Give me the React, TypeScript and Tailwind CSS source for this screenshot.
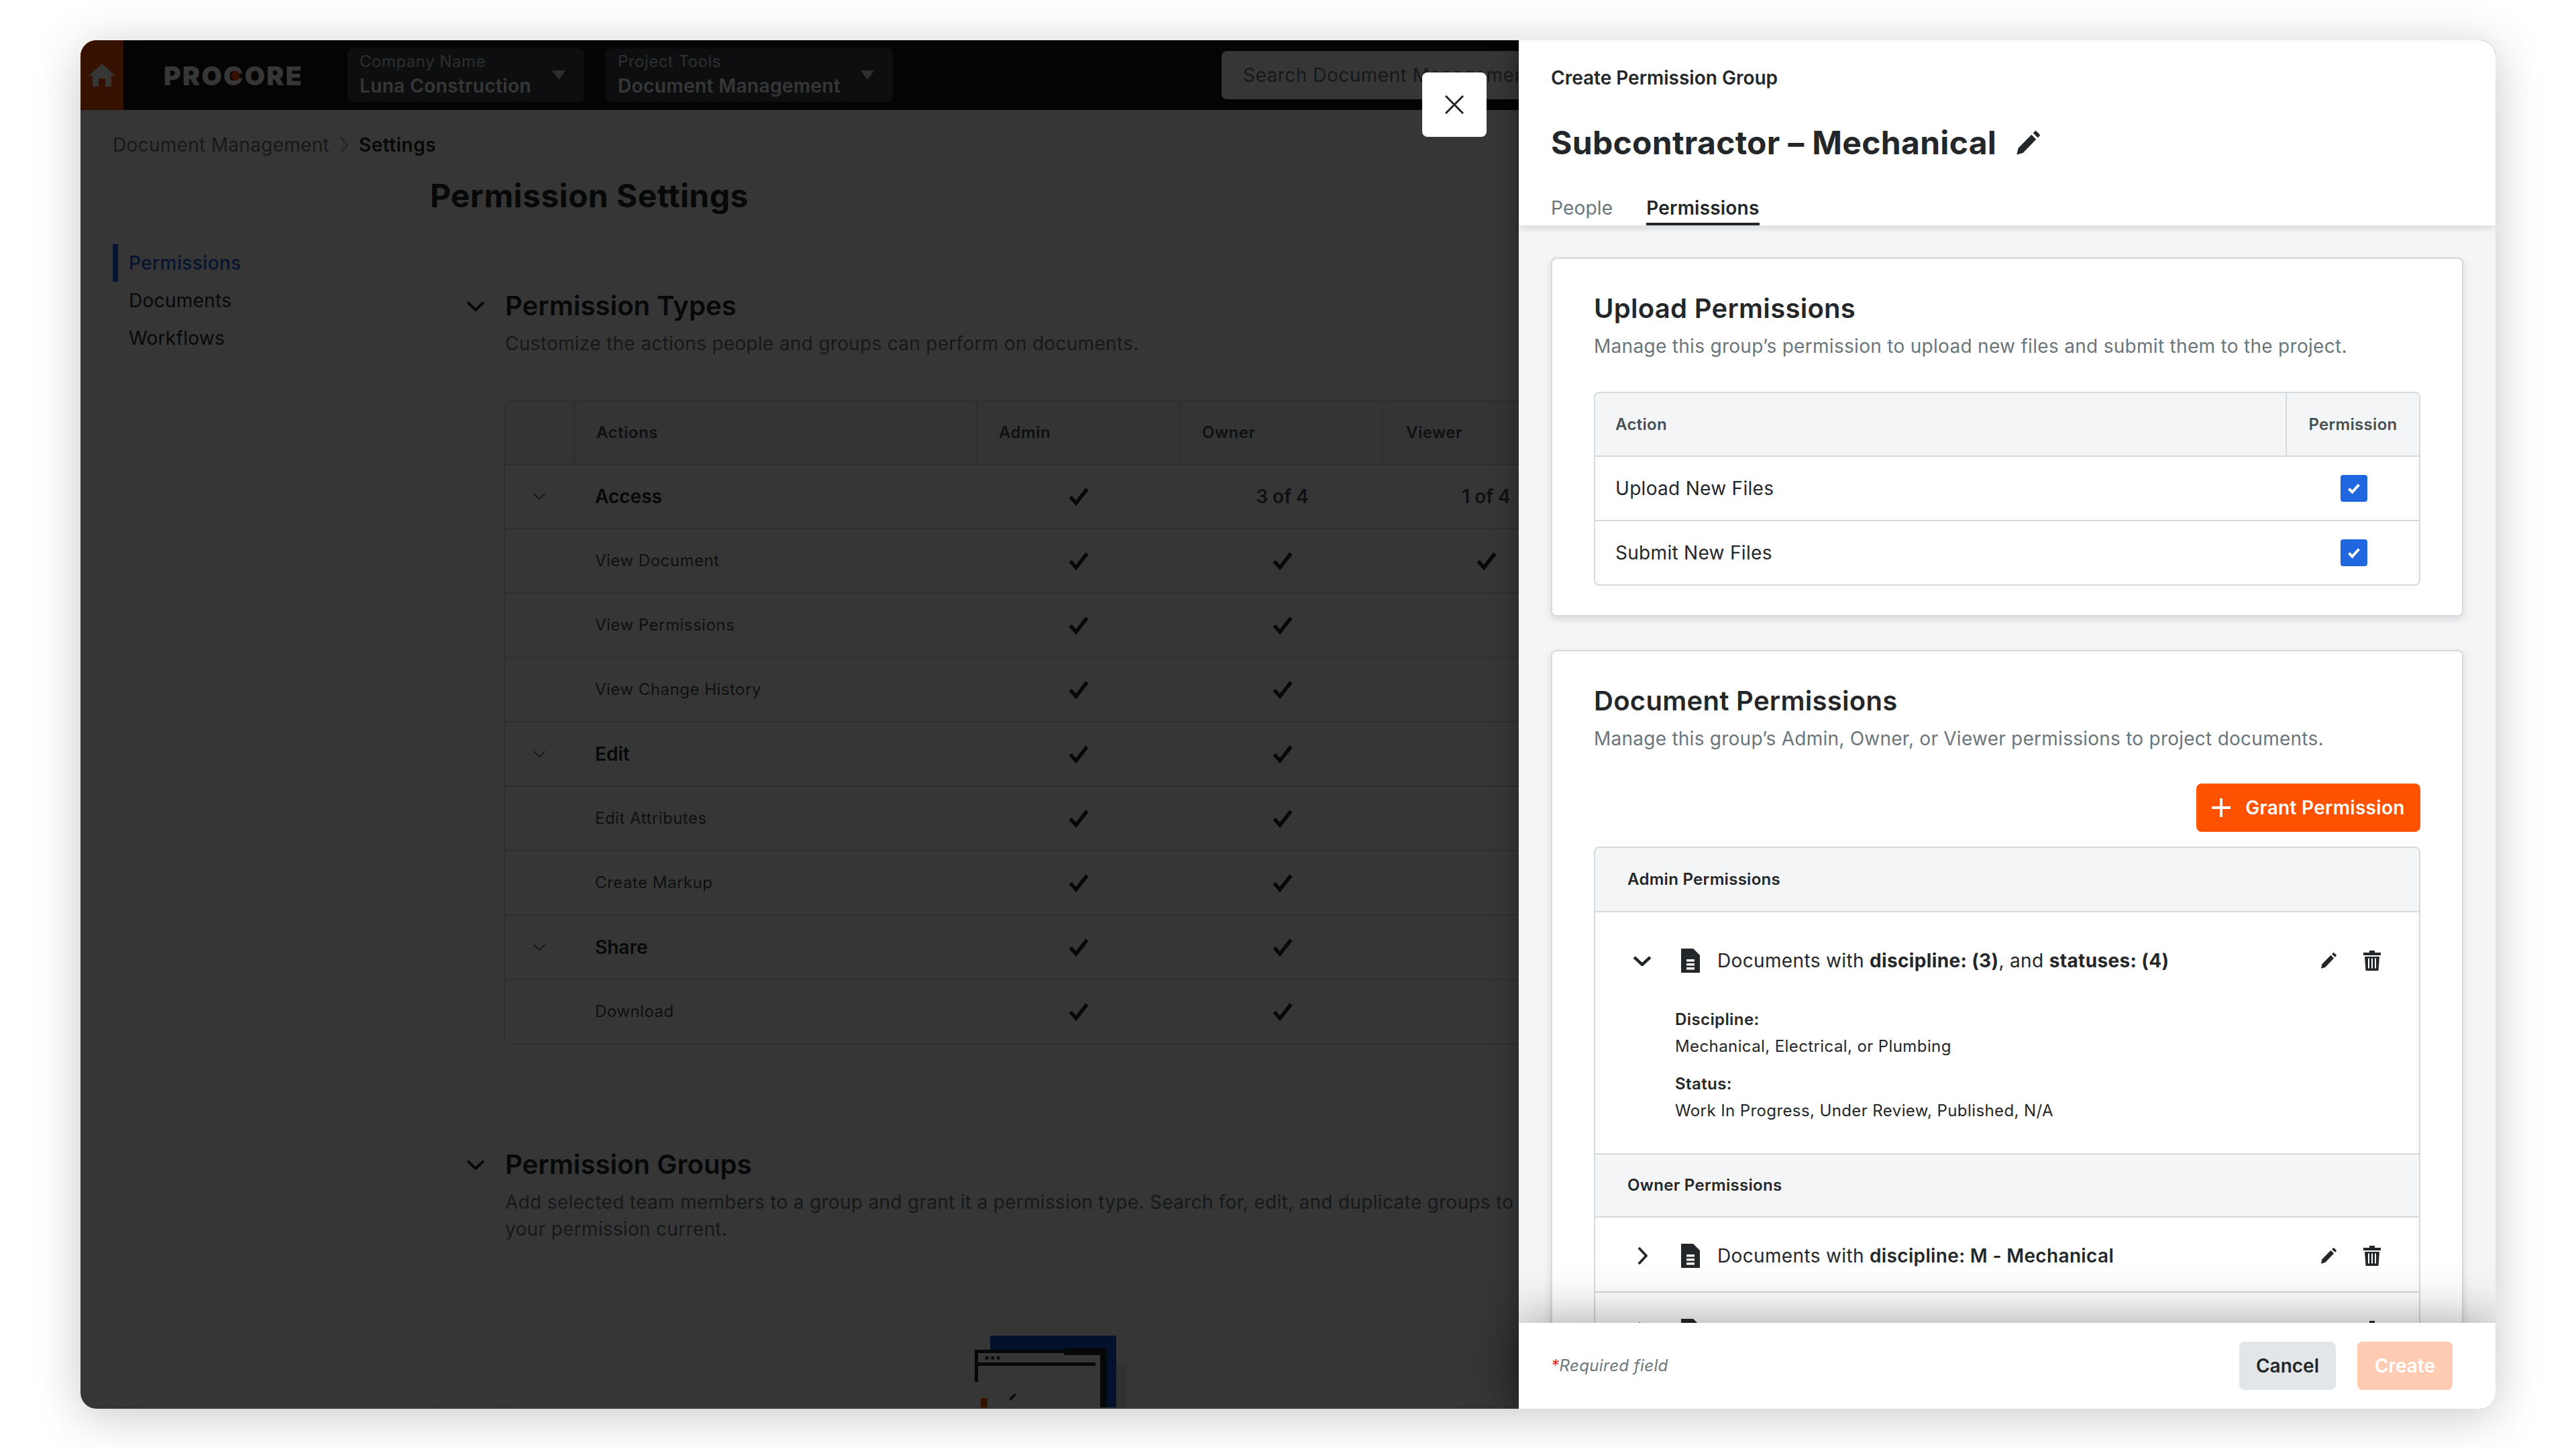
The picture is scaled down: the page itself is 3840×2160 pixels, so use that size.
const sans = "font-[family-name:Inter,sans-serif]";

function Check() {
  return (
    <svg width="32" height="28" viewBox="0 0 32 28" fill="none">
      <path d="M3.5 14.5 12 24 28.5 3" stroke="#232729" strokeWidth="5.5" />
    </svg>
  );
}

function Chevron({ size = 20, thick = 2, color = "#6a767c", right = false }: { size?: number; thick?: number; color?: string; right?: boolean }) {
  return (
    <svg width={right ? size * 0.6 : size} height={right ? size : size * 0.6} viewBox={right ? "0 0 12 20" : "0 0 20 12"} fill="none">
      <path d={right ? "M2 1.5 10 10 2 18.5" : "M1.5 2 10 10 18.5 2"} stroke={color} strokeWidth={thick} />
    </svg>
  );
}

function Pencil({ size = 28 }: { size?: number }) {
  return (
    <svg width={size} height={size} viewBox="0 0 24 24" className="fill-[#232729]">
      <path d="M2.5 22l1.2-5.5L15 5l4 4L7.8 20.5zM16.4 3.6l1.5-1.5a1 1 0 0 1 1.4 0l2.6 2.6a1 1 0 0 1 0 1.4l-1.5 1.5z" />
    </svg>
  );
}

function Trash() {
  return (
    <svg width="28" height="30" viewBox="0 0 28 30">
      <path fill="#232729" d="M10 0h8v3h9v4H1V3h9zM3 9h22l-1.5 21h-19z" />
      <path fill="#fff" d="M8 11.5h2v15H8zM13 11.5h2v15h-2zM18 11.5h2v15h-2z" />
    </svg>
  );
}

function DocIcon() {
  return (
    <svg width="28" height="36" viewBox="0 0 28 36" className="shrink-0">
      <path fill="#232729" d="M0 0h18l10 10v26H0z" />
      <path fill="#fff" d="M8 16h12v3.5H8zM8 22h12v3.5H8zM8 28h12v3.5H8z" />
    </svg>
  );
}

function Checkbox() {
  return (
    <div className="flex h-10 w-10 items-center justify-center rounded bg-[#2066df]">
      <svg width="22" height="18" viewBox="0 0 22 18" fill="none">
        <path d="M3.5 9.5 8.5 14.5 18.5 3.5" stroke="#fff" strokeWidth="4" />
      </svg>
    </div>
  );
}

function SelectBox({ label, value, width }: { label: string; value: string; width: string }) {
  return (
    <div className={`flex h-20 items-center justify-between rounded-lg bg-[#3a4247] pl-[18px] pr-7 ${width}`}>
      <div>
        <div className="text-[24px] leading-[32px] tracking-[0.5px] text-[#d6dadc]">{label}</div>
        <div className="text-[28px] leading-[40px] font-semibold tracking-[0.4px] text-white">{value}</div>
      </div>
      <div className="h-0 w-0 border-x-[10px] border-t-[14px] border-x-transparent border-t-[#d6dadc]" />
    </div>
  );
}

const leftRows = [
  { name: "Access", group: true, owner: "3 of 4", viewer: "1 of 4" },
  { name: "View Document", viewer: "check" },
  { name: "View Permissions" },
  { name: "View Change History" },
  { name: "Edit", group: true },
  { name: "Edit Attributes" },
  { name: "Create Markup" },
  { name: "Share", group: true },
  { name: "Download" },
];

function LeftTable() {
  const cols = "grid grid-cols-[102px_600px_303px_304px_304px]";
  return (
    <div className="w-[1900px] rounded-lg border-2 border-[#d6dadc]">
      <div className={`${cols} h-[92px] items-stretch bg-[#f4f5f6] text-[24px] font-semibold tracking-[0.5px] text-[#464f53]`}>
        <div />
        {["Actions", "Admin", "Owner", "Viewer"].map((h) => (
          <div key={h} className="flex items-center border-l-2 border-[#d6dadc] pl-8">{h}</div>
        ))}
      </div>
      {leftRows.map((r) => (
        <div key={r.name} className={`${cols} h-24 items-center border-t-2 border-[#d6dadc] bg-white`}>
          <div className="flex justify-center">{r.group && <Chevron />}</div>
          <div className={`pl-8 ${r.group ? "text-[28px] font-semibold text-[#232729]" : "text-[24px] tracking-[0.5px] text-[#464f53]"}`}>{r.name}</div>
          <div className="flex justify-center pl-[3px]"><Check /></div>
          <div className="flex justify-center pl-[3px]">
            {r.owner ? <span className="text-[28px] font-semibold text-[#464f53]">{r.owner}</span> : <Check />}
          </div>
          <div className="flex justify-center pl-[3px]">
            {r.viewer === "check" ? <Check /> : r.viewer ? <span className="text-[28px] font-semibold text-[#464f53]">{r.viewer}</span> : null}
          </div>
        </div>
      ))}
    </div>
  );
}

function SectionHead({ title, children }: { title: string; children: React.ReactNode }) {
  return (
    <div className="flex">
      <div className="flex h-14 w-[110px] items-center pl-[52px]">
        <Chevron size={28} thick={2.8} color="#232729" />
      </div>
      <div>
        <h2 className="text-[40px] leading-[56px] font-semibold tracking-[0.1px] text-[#232729]">{title}</h2>
        <p className="mt-2 w-[1600px] text-[28px] leading-[40px] tracking-[0.3px] text-[#6a767c]">{children}</p>
      </div>
    </div>
  );
}

// empty state drawing of the groups section, cut off by the window edge
function Illustration() {
  return (
    <svg width="230" height="108" viewBox="0 0 230 108" className="block">
      <rect x="23" y="1" width="188" height="107" fill="#0f56c8" />
      <rect x="211" y="45" width="16" height="63" fill="#e3e6e8" />
      <rect x="0" y="22" width="197" height="86" fill="#ffffff" />
      <rect x="23" y="61" width="107" height="47" fill="#fcfcfc" />
      <rect x="0" y="22" width="197" height="5" fill="#1d2124" />
      <rect x="133" y="20" width="64" height="10" fill="#1d2124" />
      <rect x="0" y="22" width="5" height="48" fill="#1d2124" />
      <rect x="0" y="41" width="180" height="5" fill="#1d2124" />
      <rect x="187" y="22" width="10" height="86" fill="#1d2124" />
      <path fill="#1d2124" d="M16 32h4.5v4.5H16zM24.5 32H29v4.5h-4.5zM33 32h4.5v4.5H33z" />
      <rect x="9" y="94" width="10" height="14" fill="#ff5200" />
      <path d="M52.5 96.5l8-8" stroke="#1d2124" strokeWidth="3.5" />
    </svg>
  );
}

function GroupHeader({ children, first = false }: { children: string; first?: boolean }) {
  return (
    <div className={`flex h-[94px] items-center bg-[#f4f5f6] px-12 text-[24px] font-semibold tracking-[0.3px] text-[#232729] ${first ? "rounded-t-lg" : "border-t-2 border-[#d6dadc]"}`}>
      {children}
    </div>
  );
}

function DocRow({ children }: { children: React.ReactNode }) {
  return (
    <div className="flex h-28 items-center border-t-2 border-[#d6dadc] px-14 pt-[4px]">
      <div className="w-[72px] pl-1.5">
        <Chevron size={28} thick={2.6} color="#232729" right />
      </div>
      <DocIcon />
      <div className="ml-[26px] flex-1 text-[28px] tracking-[0.35px] text-[#232729]">{children}</div>
      <div className="flex items-center gap-[37px]">
        <Pencil />
        <Trash />
      </div>
    </div>
  );
}

export default function App() {
  return (
    <div className={`h-[2160px] w-[3840px] overflow-hidden bg-white px-[120px] py-[60px] ${sans}`}>
      <div className="relative h-[2040px] w-[3600px] overflow-hidden rounded-3xl bg-white shadow-[0_10px_70px_rgba(0,0,0,0.22)]">
        {/* page behind the panel */}
        <div className="h-full bg-white">
          <header className="flex h-[104px] items-center bg-[#141414]">
            <div className="flex h-full w-16 items-center justify-center bg-[#ff5200]">
              <svg width="40" height="34" viewBox="0 0 40 34" className="fill-white">
                <path d="M20 0l20 18h-6v16h-9V22h-10v12H6V18H0z" />
              </svg>
            </div>
            <div className="relative ml-[60px] w-[274px] text-[39px] leading-none font-black tracking-[2.4px] text-white">
              PROCORE
              <svg width="14" height="14" viewBox="0 0 14 14" className="absolute left-[100px] top-[13px]">
                <path d="M4 0h6l4 7-4 7H4L0 7z" fill="#ff5200" />
              </svg>
            </div>
            <SelectBox label="Company Name" value="Luna Construction" width="w-[353px]" />
            <div className="w-8" />
            <SelectBox label="Project Tools" value="Document Management" width="w-[428px]" />
            <div className="ml-[490px] flex h-[72px] w-[640px] items-center rounded-lg bg-white pl-8 text-[28px] tracking-[0.5px] text-[#6a767c]">
              Search Document Management
            </div>
          </header>

          <div className="mt-8 flex h-10 items-center gap-[15px] pl-12 text-[28px] tracking-[0.3px]">
            <span className="text-[#6a767c]">Document Management</span>
            <svg width="14" height="26" viewBox="0 0 14 26" fill="none"><path d="M2 2l10 11L2 24" stroke="#6a767c" strokeWidth="1.5" /></svg>
            <span className="font-semibold tracking-[0.5px] text-[#232729]">Settings</span>
          </div>

          <div className="mt-6 flex pl-12">
            <nav className="w-[473px] pt-[104px] text-[28px] tracking-[0.3px]">
              <div className="flex h-14 items-center border-l-8 border-[#2066df] pl-4 font-medium tracking-[0.4px] text-[#2066df]">Permissions</div>
              <div className="flex h-14 items-center pl-6 text-[#232729]">Documents</div>
              <div className="flex h-14 items-center pl-6 text-[#232729]">Workflows</div>
            </nav>
            <main className="w-[2900px]">
              <h1 className="text-[48px] leading-[64px] font-bold tracking-[0.4px] text-[#232729]">Permission Settings</h1>
              <section className="mt-10 h-[1256px] rounded-lg border-2 border-[#f4f5f6] bg-[#fcfcfc] pt-[62px]">
                <SectionHead title="Permission Types">Customize the actions people and groups can perform on documents.</SectionHead>
                <div className="ml-[108px] mt-[65px]"><LeftTable /></div>
              </section>
              <section className="mt-6 h-[600px] rounded-lg border-2 border-[#f4f5f6] bg-[#fcfcfc] pt-[62px]">
                <SectionHead title="Permission Groups">
                  Add selected team members to a group and grant it a permission type. Search for, edit, and duplicate groups to keep your permission current.
                </SectionHead>
                <div className="ml-[108px] mt-[63px] h-[300px] w-[1900px] border-2 border-[#f4f5f6] pl-[700px] pt-[73px]">
                  <Illustration />
                </div>
              </section>
            </main>
          </div>
        </div>

        {/* dim layer */}
        <div className="absolute inset-0 bg-black/[0.79]" />

        <button className="absolute left-[2000px] top-12 flex h-24 w-24 items-center justify-center rounded-lg bg-white">
          <svg width="28" height="28" viewBox="0 0 28 28" fill="none"><path d="M1 1l26 26M27 1L1 27" stroke="#232729" strokeWidth="3" /></svg>
        </button>

        {/* side panel */}
        <aside className="absolute bottom-0 right-0 top-0 flex w-[1456px] flex-col bg-[#f4f5f6] shadow-[0_0_40px_rgba(0,0,0,0.3)]">
          <div className="relative z-10 h-[276px] shrink-0 bg-white px-12 pt-9 shadow-[0_2px_12px_rgba(0,0,0,0.16)]">
            <div className="text-[28px] leading-10 font-semibold text-[#232729]">Create Permission Group</div>
            <div className="mt-[49px] flex h-14 items-center gap-[26px]">
              <h1 className="text-[48px] font-bold tracking-[0.3px] text-[#232729]">Subcontractor – Mechanical</h1>
              <Pencil size={42} />
            </div>
            <div className="mt-[49px] flex gap-[50px] text-[28px] leading-10 tracking-[0.2px]">
              <div className="text-[#6a767c]">People</div>
              <div className="border-b-4 border-[#232729] pb-0.5 font-semibold text-[#232729]">Permissions</div>
            </div>
          </div>

          <div className="flex-1 overflow-hidden px-12 pt-12">
            <div className="h-[535px] rounded-lg border-2 border-[#d6dadc] bg-white px-[62px] pt-[46px] shadow-[0_4px_12px_rgba(0,0,0,0.12)]">
              <h2 className="text-[40px] leading-[56px] font-semibold tracking-[0.3px] text-[#232729]">Upload Permissions</h2>
              <p className="mt-2 text-[28px] leading-10 tracking-[0.3px] text-[#6a767c]">Manage this group’s permission to upload new files and submit them to the project.</p>
              <div className="mt-12 rounded-lg border-2 border-[#d6dadc]">
                <div className="grid h-[93px] grid-cols-[1fr_199px] rounded-t-lg bg-[#f4f5f6] text-[24px] font-semibold tracking-[0.3px] text-[#464f53]">
                  <div className="flex items-center pl-[30px]">Action</div>
                  <div className="flex items-center justify-center border-l-2 border-[#d6dadc]">Permission</div>
                </div>
                {["Upload New Files", "Submit New Files"].map((t) => (
                  <div key={t} className="grid h-24 grid-cols-[1fr_199px] items-center border-t-2 border-[#d6dadc] text-[28px] tracking-[0.3px] text-[#232729]">
                    <div className="pl-[30px]">{t}</div>
                    <div className="flex justify-center pl-1"><Checkbox /></div>
                  </div>
                ))}
              </div>
            </div>

            <div className="mt-[50px] rounded-lg border-2 border-[#d6dadc] bg-white px-[62px] pt-[46px] shadow-[0_4px_12px_rgba(0,0,0,0.12)]">
              <h2 className="text-[40px] leading-[56px] font-semibold tracking-[0.3px] text-[#232729]">Document Permissions</h2>
              <p className="mt-2 text-[28px] leading-10 tracking-[0.25px] text-[#6a767c]">Manage this group’s Admin, Owner, or Viewer permissions to project documents.</p>
              <div className="mt-[47px] flex justify-end">
                <button className="flex h-[72px] w-[334px] items-center justify-center gap-[22px] rounded-lg bg-[#ff5200] text-[28px] font-semibold tracking-[0.3px] text-white">
                  <svg width="28" height="28" viewBox="0 0 28 28"><path d="M12 0h4v12h12v4H16v12h-4V16H0v-4h12z" fill="#fff" /></svg>
                  Grant Permission
                </button>
              </div>
              <div className="mt-[22px] rounded-lg border-2 border-[#d6dadc]">
                <GroupHeader first>Admin Permissions</GroupHeader>
                <div className="border-t-2 border-[#d6dadc] pt-4">
                  <div className="flex h-28 items-center px-14">
                    <div className="w-[72px]"><Chevron size={28} thick={3.2} color="#232729" /></div>
                    <DocIcon />
                    <div className="ml-[26px] flex-1 text-[28px] tracking-[0.35px] text-[#232729]">
                      Documents with <b className="font-bold">discipline: (3)</b>, and <b className="font-bold">statuses: (4)</b>
                    </div>
                    <div className="flex items-center gap-[37px]"><Pencil /><Trash /></div>
                  </div>
                  <div className="pb-[43px] pl-[119px] pt-3 text-[24px] leading-10 tracking-[0.4px] text-[#232729]">
                    <div className="font-semibold">Discipline:</div>
                    <div>Mechanical, Electrical, or Plumbing</div>
                    <div className="mt-4 font-semibold">Status:</div>
                    <div>Work In Progress, Under Review, Published, N/A</div>
                  </div>
                </div>
                <GroupHeader>Owner Permissions</GroupHeader>
                <DocRow>Documents with <b className="font-semibold">discipline: M - Mechanical</b></DocRow>
                <DocRow>Documents with <b className="font-semibold">discipline: E - Electrical</b></DocRow>
              </div>
            </div>
          </div>

          <footer className="relative z-10 flex h-32 shrink-0 items-center justify-between bg-white pl-12 pr-16 shadow-[0_0_80px_rgba(0,0,0,0.4)]">
            <div className="text-[24px] italic tracking-[0.4px] text-[#6a767c]"><span className="text-[#e12020]">*</span>Required field</div>
            <div className="flex gap-8">
              <button className="h-[72px] w-36 rounded-lg bg-[#e3e6e8] text-[28px] font-semibold text-[#232729]">Cancel</button>
              <button className="h-[72px] w-[142px] rounded-lg bg-[#ffccb3] text-[28px] font-semibold text-white">Create</button>
            </div>
          </footer>
        </aside>
      </div>
    </div>
  );
}
